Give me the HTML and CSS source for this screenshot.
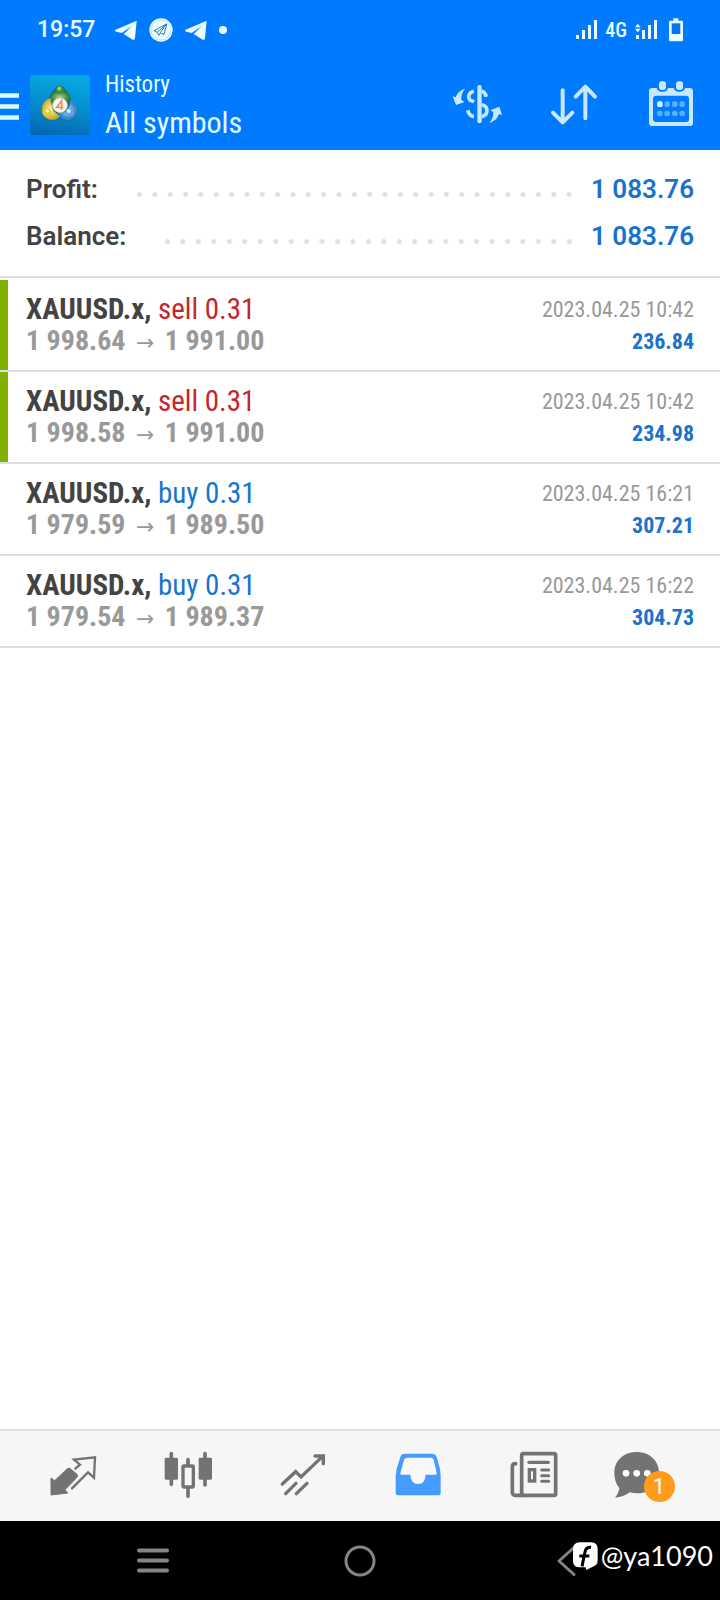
FILE: index.html
```html
<!DOCTYPE html>
<html lang="en">
<head>
<meta charset="utf-8">
<meta name="viewport" content="width=device-width, initial-scale=1">
<title>History</title>
<link rel="stylesheet" href="styles.css">
</head>
<body>
<div class="screen">
  <div class="status">
    <span class="clock">19:57</span>
    <div class="notices">
      <svg width="22" height="24" viewBox="343 54 66 72"><path d="M408 62 343 90Q342 94 347 95L363 99 394 78 369 102 396 119Q402 121 403 115Z" fill="#e9fdff"/></svg>
      <svg width="24" height="24" viewBox="445 53 72 72"><circle cx="481" cy="89" r="35" fill="#eafcff"/><circle cx="481" cy="89" r="30" fill="none" stroke="#6bb3f5" stroke-width="1"/><path d="M498 71 460 91 470 96 474 105 480 99 490 102ZM498 71 470 96M498 71 477 99" fill="none" stroke="#2d7cc4" stroke-width="3" stroke-linejoin="round"/></svg>
      <svg width="22" height="24" viewBox="343 54 66 72"><path d="M408 62 343 90Q342 94 347 95L363 99 394 78 369 102 396 119Q402 121 403 115Z" fill="#e9fdff"/></svg>
      <svg width="8" height="24" viewBox="0 0 8 24"><circle cx="4" cy="12" r="4" fill="#e9fdff"/></svg>
    </div>
    <div class="system">
      <svg width="21" height="24" viewBox="441 54 63 72" fill="#e9fdff"><path d="M441 105h9v12h-9zM459 90h9v27h-9zM477 75h9v42h-9zM495 60h9v57h-9z"/></svg>
      <span class="network">4G</span>
      <svg width="22" height="24" viewBox="612 54 66 72" fill="#e9fdff"><path d="M615 105h9v12h-9zM633 90h9v27h-9zM651 75h9v42h-9zM669 60h9v57h-9zM612 82l8.500-11 8.500 11zM612 86l8.500 11 8.500-11z"/></svg>
      <svg class="battery" width="14" height="24" viewBox="716 53 42 72"><path d="M729 54h15v7h10q4 0 4 4v54q0 4-4 4h-34q-4 0-4-4V65q0-4 4-4h9z" fill="#e9fdff"/><path d="M724 69h26v32h-26z" fill="#0676f0"/></svg>
    </div>
  </div>

  <header class="topbar">
    <button class="menu" aria-label="Menu"><svg width="19" height="28" viewBox="0 0 19 28"><path d="M0 2.500h19M0 13.500h19M0 24.500h19" stroke="#d9ffff" stroke-width="4.500"/></svg></button>
    <svg class="logo" width="60" height="60" viewBox="0 0 180 180">
      <defs>
        <linearGradient id="tile" x1="0.200" y1="0" x2="0" y2="1"><stop offset="0" stop-color="#07a5e2"/><stop offset="0.550" stop-color="#0587c6"/><stop offset="1" stop-color="#0562b2"/></linearGradient>
        <radialGradient id="green"><stop offset="0" stop-color="#a8d582"/><stop offset="1" stop-color="#27743a"/></radialGradient>
        <radialGradient id="gold"><stop offset="0" stop-color="#fff5a0"/><stop offset="1" stop-color="#c6ab24"/></radialGradient>
        <radialGradient id="blue"><stop offset="0" stop-color="#b9e5ff"/><stop offset="1" stop-color="#287bc2"/></radialGradient>
      </defs>
      <rect width="180" height="180" rx="8" fill="url(#tile)"/>
      <path d="M90 32c10 0 15 6 16 13 10 7 16 18 18 32 15 9 21 22 17 39-5 16-17 22-32 20q-12-2-19-9-9 9-25 9c-18-1-28-11-29-25-1-12 7-19 17-24 2-18 8-31 19-42 2-8 8-13 18-13z" fill="#17566f" opacity="0.700"/>
      <path d="M79 76 101 77 121 80C119 62 113 53 103 48H78C67 56 60 67 58 85Z" fill="url(#green)" stroke="#388341" stroke-width="3"/>
      <circle cx="89" cy="44" r="12" fill="#3c8b40"/><circle cx="88" cy="41" r="6" fill="#98cb76"/>
      <path d="M60 70C41 78 34 95 37 111c4 19 20 25 38 22q9-2 14-9L70 107Z" fill="url(#gold)" stroke="#b7a72a" stroke-width="2"/>
      <path d="M124 77c13 8 18 20 14 37-4 15-14 20-27 19-12-1-20-8-25-16l26-8Z" fill="url(#blue)" stroke="#4593d0" stroke-width="3"/>
      <circle cx="50" cy="112" r="12" fill="#e0cc43"/><circle cx="52" cy="108" r="5" fill="#fff3ac"/>
      <circle cx="120" cy="111" r="12" fill="#5baae5"/><circle cx="116" cy="108" r="6" fill="#d9f5ff"/>
      <circle cx="90" cy="91" r="22" fill="#f7f6ee" stroke="#d1d6bf" stroke-width="2"/>
      <path d="M95 105V77L80 97h20" fill="none" stroke="#ec8f5d" stroke-width="5"/>
    </svg>
    <div class="heading"><p>History</p><h1>All symbols</h1></div>
    <div class="actions">
      <button aria-label="Filter symbols"><svg width="52" height="52" viewBox="62 237 156 156" fill="#c8e8ff">
        <path d="M104 266C91 270 80 279 76 292L67 289 77 315 102 306 93 299C92 287 96 276 104 266ZM177 369C190 366 202 355 206 342L215 345 207 320 180 331 189 336C190 349 185 359 177 369Z"/>
        <rect x="141" y="255" width="13" height="115" rx="6"/>
        <g fill="none" stroke="#c8e8ff" stroke-width="11"><path d="M131 274C113 276 109 300 126 303L131 306M131 350Q117 349 112 331M154 273Q164 276 168 290M154 314C177 319 173 347 154 350"/></g>
      </svg></button>
      <button aria-label="Sort"><svg width="52" height="52" viewBox="354 237 156 156" fill="none" stroke="#c8e8ff" stroke-width="12" stroke-linecap="round" stroke-linejoin="round"><path d="M398 271v95M369 338l29 29 29-29M466 355v-94M437 290l29-30 29 30"/></svg></button>
      <button aria-label="Choose period"><svg width="52" height="52" viewBox="645 237 156 156">
        <path d="M667 264h13q3 11 17 11t17-11h17q3 11 17 11t17-11h14q10 0 10 10v94q0 10-10 10H667q-10 0-10-10v-94q0-10 10-10zM679 287q-10 0-10 10v60q0 9 10 9h89q9 0 9-9v-60q0-10-9-10z" fill="#c8e8ff" fill-rule="evenodd"/>
        <rect x="683" y="240" width="29" height="34" rx="11" fill="#007aff"/><rect x="734" y="240" width="29" height="34" rx="11" fill="#007aff"/>
        <rect x="687" y="244" width="21" height="26" rx="8" fill="#c8e8ff"/><rect x="738" y="244" width="21" height="26" rx="8" fill="#c8e8ff"/>
        <rect x="681" y="304" width="17" height="17" rx="5" fill="#d6f3ff"/>
        <g fill="#5daefb"><rect x="703" y="304" width="17" height="17" rx="7"/><rect x="726" y="304" width="17" height="17" rx="7"/><rect x="748" y="304" width="17" height="17" rx="7"/><rect x="681" y="332" width="17" height="17" rx="7"/><rect x="703" y="332" width="17" height="17" rx="7"/><rect x="726" y="332" width="17" height="17" rx="7"/><rect x="748" y="332" width="17" height="17" rx="7"/></g>
      </svg></button>
    </div>
  </header>

  <main class="content">
    <dl class="summary">
      <div class="total"><dt>Profit:</dt><dd>1 083.76</dd></div>
      <div class="total"><dt>Balance:</dt><dd>1 083.76</dd></div>
    </dl>
    <ul class="deals">
      <li class="deal marked">
        <div class="trade"><p class="symbol"><b>XAUUSD.x,</b> <span class="sell">sell 0.31</span></p><p class="prices">1 998.64 <span class="arrow">→</span> 1 991.00</p></div>
        <div class="result"><time datetime="2023-04-25T10:42">2023.04.25 10:42</time><p class="amount">236.84</p></div>
      </li>
      <li class="deal marked">
        <div class="trade"><p class="symbol"><b>XAUUSD.x,</b> <span class="sell">sell 0.31</span></p><p class="prices">1 998.58 <span class="arrow">→</span> 1 991.00</p></div>
        <div class="result"><time datetime="2023-04-25T10:42">2023.04.25 10:42</time><p class="amount">234.98</p></div>
      </li>
      <li class="deal">
        <div class="trade"><p class="symbol"><b>XAUUSD.x,</b> <span class="buy">buy 0.31</span></p><p class="prices">1 979.59 <span class="arrow">→</span> 1 989.50</p></div>
        <div class="result"><time datetime="2023-04-25T16:21">2023.04.25 16:21</time><p class="amount">307.21</p></div>
      </li>
      <li class="deal">
        <div class="trade"><p class="symbol"><b>XAUUSD.x,</b> <span class="buy">buy 0.31</span></p><p class="prices">1 979.54 <span class="arrow">→</span> 1 989.37</p></div>
        <div class="result"><time datetime="2023-04-25T16:22">2023.04.25 16:22</time><p class="amount">304.73</p></div>
      </li>
    </ul>
  </main>

  <nav class="tabs">
    <button aria-label="Quotes"><svg width="70" height="50" viewBox="112 91 210 150">
      <path d="M151 172 162 180 199 145Q205 139 211 146L229 161Q233 166 228 171L193 207 201 217 151 223Z" fill="#737373" stroke="#737373" stroke-width="3" stroke-linejoin="round"/>
      <path d="M224 144 238 132 220 117 283 110 280 171 262 155 214 203" fill="none" stroke="#737373" stroke-width="7" stroke-linecap="round"/>
    </svg></button>
    <button aria-label="Charts"><svg width="70" height="50" viewBox="457 91 210 150">
      <path d="M512 99v92M562 117v16M562 203v24M613 99v94" stroke="#737373" stroke-width="11" stroke-linecap="round"/>
      <rect x="492" y="111" width="40" height="66" rx="4" fill="#737373"/><rect x="594" y="111" width="40" height="66" rx="4" fill="#737373"/>
      <rect x="547" y="136" width="31" height="63" rx="2" fill="#f7f7f7" stroke="#737373" stroke-width="10"/>
    </svg></button>
    <button aria-label="Trade"><svg width="70" height="50" viewBox="802 91 210 150" fill="none" stroke="#737373" stroke-width="10" stroke-linecap="round">
      <path d="M845 190 885 153 901 169 968 105M943 106h25v23"/><path d="M855 219 886 188M887 219 919 188"/>
    </svg></button>
    <button aria-label="History" aria-current="page"><svg width="70" height="50" viewBox="67 91 210 150">
      <path d="M131 99h83q10 0 14 10l10 35 2 22v50q0 8-9 8H114q-9 0-9-8v-50l3-22 11-35q3-10 12-10z" fill="#459cff"/>
      <path d="M136 111h74q7 0 9 6l9 41q1 4-4 4h-29q-2 28-23 28t-23-28h-26q-5 0-4-4l11-41q2-6 10-6z" fill="#f8f8f8"/>
    </svg></button>
    <button aria-label="News"><svg width="70" height="50" viewBox="412 91 210 150" fill="none" stroke="#737373" stroke-width="11">
      <rect x="483" y="99" width="102" height="125" rx="5"/><path d="M465 129q-10 0-10 9v77q0 9 9 9h25" stroke-linecap="round"/>
      <path d="M505 125h58" stroke-linecap="round" stroke-width="10"/><rect x="506" y="147" width="16" height="34" stroke-width="10"/>
      <path d="M543 148h21M543 165h21M543 182h21" stroke-linecap="round" stroke-width="9"/>
    </svg></button>
    <button class="messages" aria-label="Messages"><svg width="70" height="50" viewBox="757 91 210 150">
      <path d="M828 94c38 0 67 25 67 62s-28 62-64 62q-13 0-24-3-18 15-44 16 12-15 13-29-15-17-15-46c0-37 29-62 67-62z" fill="#737373"/>
      <circle cx="796" cy="158" r="10" fill="#fff"/><circle cx="828" cy="158" r="10" fill="#fff"/><circle cx="860" cy="158" r="10" fill="#fff"/>
    </svg><span class="badge">1</span></button>
  </nav>

  <nav class="system-nav">
    <button aria-label="Recent apps"><svg width="34" height="34" viewBox="0 0 34 34"><path d="M3 6.500h28M3 16.500h28M3 26.500h28" stroke="#858585" stroke-width="4" stroke-linecap="round"/></svg></button>
    <button aria-label="Home"><svg width="34" height="34" viewBox="0 0 34 34"><circle cx="17" cy="17" r="14" fill="none" stroke="#858585" stroke-width="3"/></svg></button>
    <button aria-label="Back"><svg width="34" height="34" viewBox="0 0 34 34"><path d="M24 3.500 9 17 24 30.500" fill="none" stroke="#858585" stroke-width="3" stroke-linecap="round" stroke-linejoin="round"/></svg></button>
    <div class="handle">
      <svg width="25" height="28" viewBox="638 371 75 84"><path d="M659 372h33q20 0 20 20v33q0 17-15 20l-19 10-2-8h-17q-21 0-21-20v-35q0-20 21-20z" fill="#fff"/><path d="M692 387q-15-2-18 14l-9 43M657 413h30" fill="none" stroke="#000" stroke-width="9"/></svg>
      <span>@ya1090</span>
    </div>
  </nav>
</div>
</body>
</html>
```
FILE: styles.css
```css
* { box-sizing: border-box; }
body, h1, p, dl, dd, ul { margin: 0; padding: 0; }
body { font-family: Roboto, "Liberation Sans", sans-serif; background: #fff; color: #434343; }
svg { display: block; flex: none; }
button { display: grid; place-items: center; padding: 0; border: 0; background: none; font: inherit; color: inherit; cursor: pointer; }

.screen { display: flex; flex-direction: column; min-height: 100vh; }

.status { display: flex; align-items: center; height: 60px; padding: 0 37px; background: #007aff; color: #e9fdff; }
.clock { font-size: 23px; font-weight: 500; line-height: 24px; }
.notices { display: flex; gap: 12px; margin-left: 20px; }
.system { display: flex; align-items: center; gap: 8px; margin-left: auto; }
.network { font-family: "Roboto Condensed", "Liberation Sans Narrow", Roboto, sans-serif; font-size: 20px; font-weight: 500; line-height: 24px; }
.battery { margin-left: 4px; }

.topbar { display: flex; align-items: center; height: 90px; padding-right: 23px; background: #007aff; color: #e3fbff; }
.menu { padding-top: 4px; }
.logo { margin: 0 15px 0 11px; }
.heading { font-family: "Roboto Condensed", "Liberation Sans Narrow", Roboto, sans-serif; white-space: nowrap; }
.heading p { font-size: 23px; line-height: 36px; }
.heading h1 { font-size: 30px; font-weight: 400; line-height: 40px; }
.actions { display: flex; gap: 45px; margin-left: auto; }

.content { flex: 1; }
.summary { padding: 16px 26px; border-bottom: 2px solid #dedede; }
.total { display: flex; align-items: center; font-size: 26px; font-weight: 600; line-height: 47px; }
.total::after { content: ""; order: 1; flex: 1; height: 5px; margin: 10px 14px 0 34px; background: radial-gradient(circle, #e0e0e0 2px, transparent 3px) 0 0 / 15px 5px; background-repeat: space no-repeat; }
.total dd { order: 2; color: #1a72cc; }

.deals { padding-top: 2px; list-style: none; font-family: "Roboto Condensed", "Liberation Sans Narrow", Roboto, sans-serif; }
.deal { display: flex; justify-content: space-between; padding: 13px 26px; border-bottom: 2px solid #dedede; line-height: 32px; }
.marked { background: linear-gradient(#80b000, #80b000) left / 8px 100% no-repeat; }
.symbol { font-size: 29px; }
.prices { font-size: 28px; font-weight: 700; color: #999; }
.arrow { margin: 0 4px; font-family: "Noto Sans", "DejaVu Sans", sans-serif; font-size: 22px; font-weight: 400; line-height: 24px; }
.sell { color: #c4262c; }
.buy { color: #1775cf; }
.result { padding-top: 1px; margin-bottom: -1px; text-align: right; font-size: 22px; }
.result time { color: #999; }
.amount { font-weight: 700; color: #1a72cc; }

.tabs { display: grid; grid-template-columns: repeat(6, 1fr); height: 92px; padding: 0 15px; border-top: 2px solid #e2e2e2; background: #f6f6f6; }
.messages { position: relative; }
.badge { position: absolute; left: calc(50% - 4px); top: 40px; width: 31px; height: 31px; border-radius: 50%; background: #ff9c1a; color: #fff; font-size: 22px; line-height: 31px; text-align: center; }

.system-nav { position: relative; display: grid; grid-template-columns: repeat(3, 1fr); height: 79px; padding: 0 50px; background: #000; }
.handle { position: absolute; right: 7px; top: 17px; display: flex; align-items: center; gap: 3px; color: #fff; font-family: Lato, sans-serif; font-size: 27px; line-height: 36px; }
```
